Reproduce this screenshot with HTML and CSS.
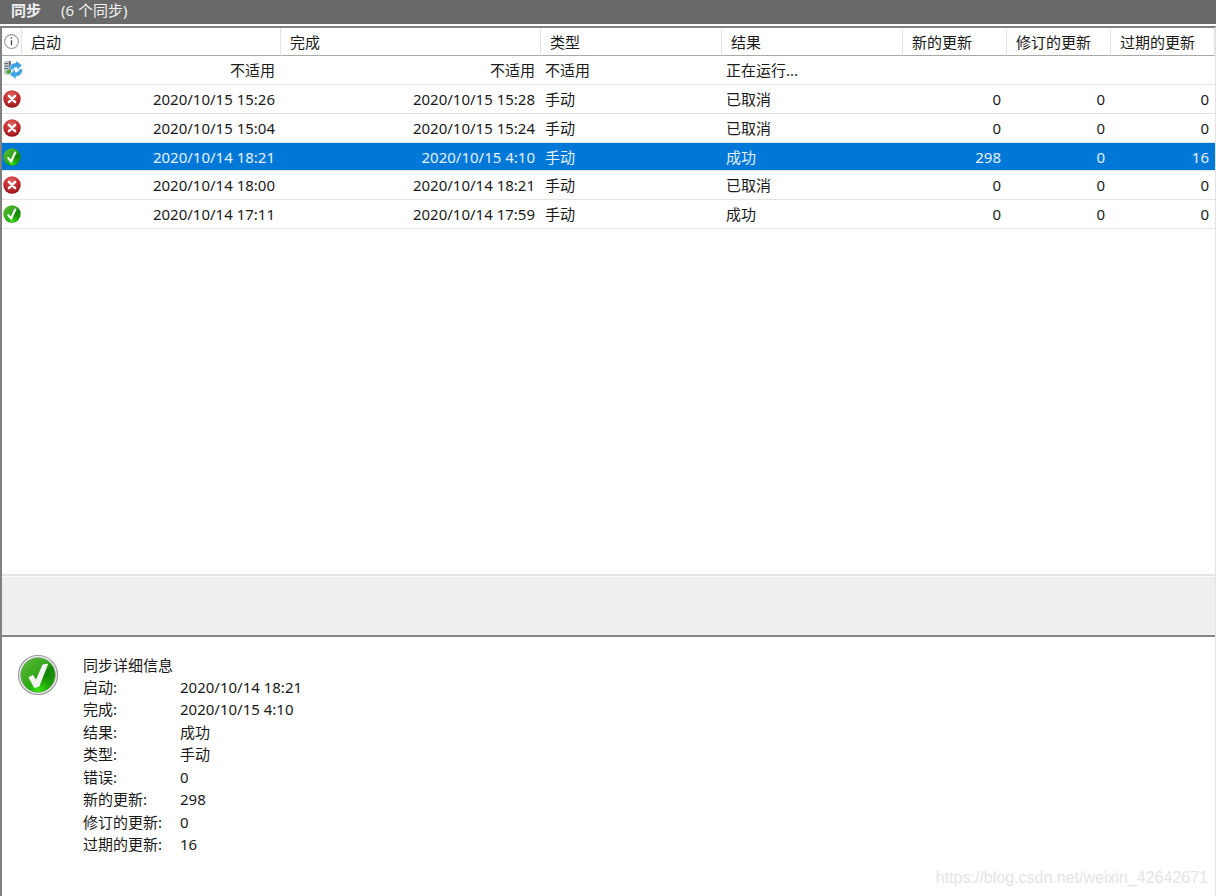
FILE: index.html
```html
<!DOCTYPE html>
<html lang="zh-CN">
<head>
<meta charset="utf-8">
<meta name="viewport" content="width=device-width, initial-scale=1">
<title>同步</title>
<link rel="stylesheet" href="styles.css">
</head>
<body>
<svg class="defs" aria-hidden="true">
  <defs>
    <radialGradient id="red" cx="45%" cy="25%" r="80%">
      <stop offset="0" stop-color="#e0605c"/><stop offset=".55" stop-color="#c12a2c"/><stop offset="1" stop-color="#8e1418"/>
    </radialGradient>
    <linearGradient id="green" x1="0" y1="0" x2="1" y2="1">
      <stop offset="0" stop-color="#5fbd3a"/><stop offset=".45" stop-color="#36a81d"/><stop offset=".6" stop-color="#128408"/><stop offset="1" stop-color="#22a80c"/>
    </linearGradient>
    <radialGradient id="glow" cx="50%" cy="95%" r="50%">
      <stop offset="0" stop-color="#3be812"/><stop offset="1" stop-color="#2bc40a" stop-opacity="0"/>
    </radialGradient>
    <linearGradient id="blue" x1="0" y1="0" x2="0" y2="1">
      <stop offset="0" stop-color="#2f92d4"/><stop offset="1" stop-color="#4db4f4"/>
    </linearGradient>
    <symbol id="cancel" viewBox="0 0 18 18">
      <circle cx="9" cy="9" r="8.7" fill="url(#red)"/>
      <path d="M5.900 5.900l6.200 6.200M12.100 5.900l-6.200 6.200" stroke="#fff" stroke-width="2.500" stroke-linecap="round"/>
    </symbol>
    <symbol id="ok" viewBox="0 0 18 18">
      <circle cx="9" cy="9" r="8.700" fill="url(#green)"/>
      <circle cx="9" cy="9" r="8.300" fill="url(#glow)"/>
      <path d="M5.300 10.200L8 13.700 12.200 4.600" fill="none" stroke="#fff" stroke-width="2.200" stroke-linecap="round" stroke-linejoin="round"/>
    </symbol>
  </defs>
</svg>
<header class="titlebar">
  <h1 class="title">同步</h1>
  <span class="count">(6 个同步)</span>
</header>
<main class="panel">
  <section class="list">
    <table class="syncs">
      <colgroup>
        <col class="c-icon"><col class="c-start"><col class="c-end"><col class="c-text"><col class="c-text"><col class="c-num"><col class="c-num"><col class="c-num">
      </colgroup>
      <thead>
        <tr>
          <th class="icon" aria-label="状态"><svg class="info" viewBox="0 0 16 16"><circle cx="8" cy="8" r="6.500" fill="none" stroke="#9a9a9a"/><path d="M8 6.800v4.700M8 4v1.500" stroke="#444" stroke-width="1.200"/></svg></th>
          <th>启动</th><th>完成</th><th>类型</th><th>结果</th><th>新的更新</th><th>修订的更新</th><th>过期的更新</th>
        </tr>
      </thead>
      <tbody>
        <tr>
          <td class="icon"><svg class="state wide" viewBox="0 0 20 20"><path d="M1 1.500L5 .5l3 .8V13l-2 1.500H1z" fill="#c2c9ca"/><path d="M1.500 3.500h4M1.500 6h4M1.500 8.500h4" stroke="#5d686c"/><path d="M6 1h2v12H6z" fill="#6b777b"/><circle cx="5.500" cy="12" r="2" fill="#3db52c"/><path d="M6.500 8.800C7 5 9.500 2.800 13 3V.8l6 4.400-4.800 5.300V7.600c-2.500-.4-3.400.6-4.200 3.200z" fill="url(#blue)" stroke="#e8f5ff" stroke-width=".5"/><path d="M19.300 8.800c.3 5-2.600 7.700-6.300 7.700v2.700l-6.500-4.800 5.500-5.200v2.900c3 .2 3.800-.8 4.500-2.800z" fill="url(#blue)" stroke="#e8f5ff" stroke-width=".5"/></svg></td>
          <td class="num">不适用</td><td class="num">不适用</td><td>不适用</td><td>正在运行...</td><td></td><td></td><td></td>
        </tr>
        <tr>
          <td class="icon"><svg class="state"><use href="#cancel"/></svg></td>
          <td class="num">2020/10/15 15:26</td><td class="num">2020/10/15 15:28</td><td>手动</td><td>已取消</td><td class="num">0</td><td class="num">0</td><td class="num">0</td>
        </tr>
        <tr>
          <td class="icon"><svg class="state"><use href="#cancel"/></svg></td>
          <td class="num">2020/10/15 15:04</td><td class="num">2020/10/15 15:24</td><td>手动</td><td>已取消</td><td class="num">0</td><td class="num">0</td><td class="num">0</td>
        </tr>
        <tr class="selected">
          <td class="icon"><svg class="state"><use href="#ok"/></svg></td>
          <td class="num">2020/10/14 18:21</td><td class="num">2020/10/15 4:10</td><td>手动</td><td>成功</td><td class="num">298</td><td class="num">0</td><td class="num">16</td>
        </tr>
        <tr>
          <td class="icon"><svg class="state"><use href="#cancel"/></svg></td>
          <td class="num">2020/10/14 18:00</td><td class="num">2020/10/14 18:21</td><td>手动</td><td>已取消</td><td class="num">0</td><td class="num">0</td><td class="num">0</td>
        </tr>
        <tr>
          <td class="icon"><svg class="state"><use href="#ok"/></svg></td>
          <td class="num">2020/10/14 17:11</td><td class="num">2020/10/14 17:59</td><td>手动</td><td>成功</td><td class="num">0</td><td class="num">0</td><td class="num">0</td>
        </tr>
      </tbody>
    </table>
  </section>
  <div class="splitter"></div>
  <section class="details">
    <svg class="badge" viewBox="0 0 42 42"><circle cx="21" cy="21" r="19.500" fill="#f2f2f2" stroke="#999" stroke-width="1.200"/><circle cx="21" cy="21" r="17.300" fill="url(#green)" stroke="#7a9a74" stroke-width=".8"/><circle cx="21" cy="21" r="17" fill="url(#glow)"/><path d="M12 23.500l4-2 3 5.300L25.800 11l4.700-.8-8.600 22-4.400 1.300z" fill="#f6f6f6" stroke="#f6f6f6" stroke-linejoin="round"/></svg>
    <div class="facts">
      <h2 class="facts-title">同步详细信息</h2>
      <dl class="fact-list">
        <dt>启动:</dt><dd>2020/10/14 18:21</dd>
        <dt>完成:</dt><dd>2020/10/15 4:10</dd>
        <dt>结果:</dt><dd>成功</dd>
        <dt>类型:</dt><dd>手动</dd>
        <dt>错误:</dt><dd>0</dd>
        <dt>新的更新:</dt><dd>298</dd>
        <dt>修订的更新:</dt><dd>0</dd>
        <dt>过期的更新:</dt><dd>16</dd>
      </dl>
    </div>
    <span class="watermark">https://blog.csdn.net/weixin_42642671</span>
  </section>
</main>
</body>
</html>
```
FILE: styles.css
```css
* {
  box-sizing: border-box;
}

body {
  margin: 0;
  min-height: 100vh;
  display: flex;
  flex-direction: column;
  background: #fff;
  color: #1a1a1a;
  font: 15px/20px "Noto Sans", "Noto Sans CJK SC", sans-serif;
}

.defs {
  position: absolute;
  width: 0;
  height: 0;
}

.titlebar {
  height: 24px;
  padding: 0 11px 5px;
  display: flex;
  align-items: center;
  gap: 20px;
  background: #696969;
  color: #f0f0f0;
}

.title {
  margin: 0;
  font-size: 15px;
  font-weight: 700;
}

.panel {
  flex: 1;
  margin-top: 2px;
  display: flex;
  flex-direction: column;
  border-top: 2px solid #808080;
  border-left: 2px solid #808080;
  border-right: 1px solid #e3e3e3;
}

.list {
  flex: 1;
}

.syncs {
  width: 100%;
  table-layout: fixed;
  border-collapse: separate;
  border-spacing: 0;
}

.c-icon { width: 20px; }
.c-start { width: 259px; }
.c-end { width: 260px; }
.c-text { width: 181px; }
.c-num { width: 104px; }

.syncs th {
  height: 28px;
  padding: 0 0 0 9px;
  border-right: 1px solid #e3e3e3;
  border-bottom: 1px solid #a8a8a8;
  font-weight: 400;
  text-align: left;
  white-space: nowrap;
}

.syncs td {
  height: 29px;
  padding: 0 6px 0 4px;
  border-bottom: 1px solid #e3e3e3;
  white-space: nowrap;
}

.syncs .selected td {
  height: 28px;
}

.syncs .num {
  text-align: right;
}

.syncs .icon {
  padding: 0;
}

.selected {
  background: #0078d7;
  color: #e4f1fb;
}

.info {
  display: block;
  width: 17px;
  height: 17px;
  margin-left: 1px;
}

.state {
  display: block;
  width: 18px;
  height: 18px;
  margin-left: 1px;
}

.wide {
  width: 20px;
  height: 20px;
}

.splitter {
  height: 63px;
  border-top: 2px solid #e6e6e6;
  border-bottom: 2px solid #858585;
  background: #efefef;
  box-shadow: inset 0 1px #fbfbfb;
}

.details {
  position: relative;
  min-height: 259px;
  padding: 17px 15px 40px;
  display: flex;
  align-items: flex-start;
  gap: 24px;
}

.badge {
  flex: none;
  width: 42px;
  height: 42px;
}

.facts-title {
  margin: 0;
  font-size: 15px;
  font-weight: 400;
  line-height: 22px;
}

.fact-list {
  margin: 0;
  display: grid;
  grid-template-columns: 97px auto;
  grid-template-rows: repeat(4, 22px 23px);
  line-height: 22px;
}

.fact-list dd {
  margin: 0;
}

.watermark {
  position: absolute;
  right: 7px;
  bottom: 8px;
  color: #e4e4e4;
  font: 16px/20px "Liberation Sans", Arial, sans-serif;
}
```
